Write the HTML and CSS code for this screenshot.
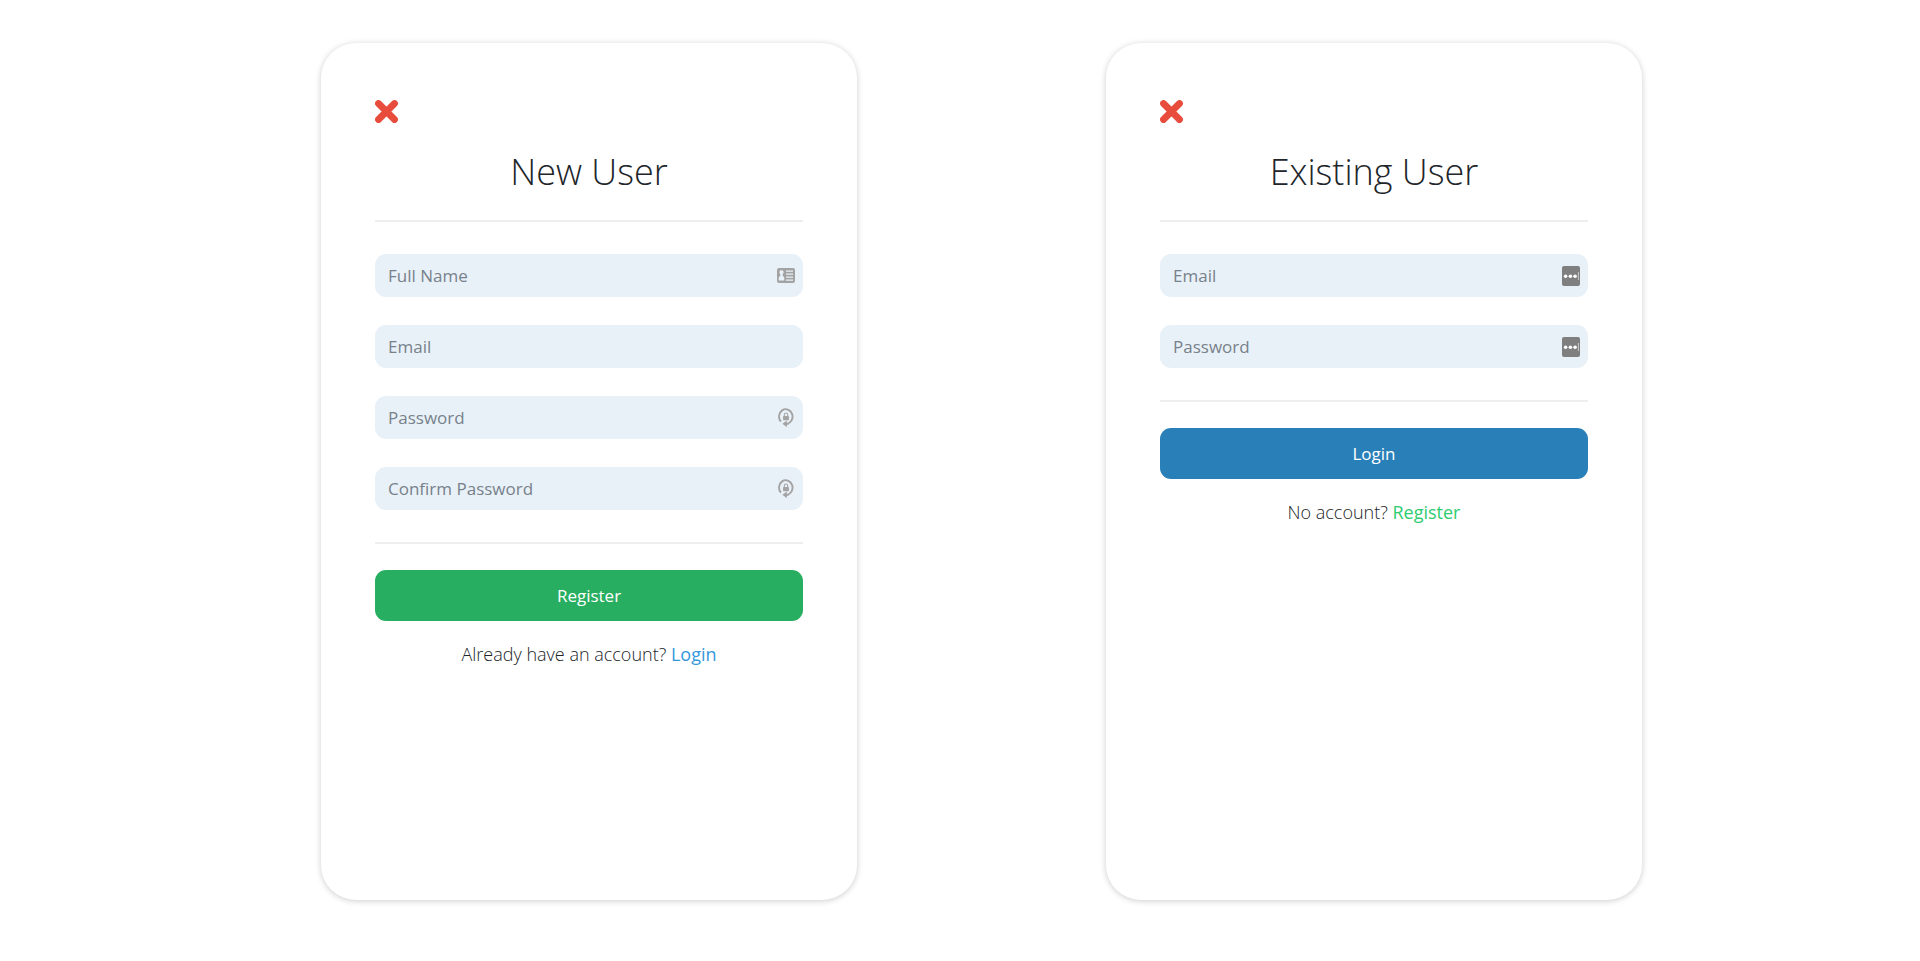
FILE: index.html
```html
<!DOCTYPE html>
<html lang="en">
<head>
<meta charset="utf-8">
<meta name="viewport" content="width=device-width, initial-scale=1">
<title>Account</title>
<link rel="stylesheet" href="styles.css">
</head>
<body>
<svg class="sprite" width="0" height="0" aria-hidden="true">
  <symbol id="close" viewBox="0 0 24 24"><path d="M3.5 3.5 19.5 19.5M19.5 3.5 3.5 19.5" fill="none" stroke="currentColor" stroke-width="6.8" stroke-linecap="round"/></symbol>
  <symbol id="card" viewBox="0 0 18 15">
    <rect width="18" height="15" rx="2" fill="#a3a3a3"/>
    <path d="M9 2.6H16V3.8H9ZM9 5.6H16V6.8H9ZM9 8.6H16V9.8H9ZM9 11.6H16V12.8H9Z" fill="#eaf1f8"/>
    <path d="M4.5 2.4A1.9 1.9 0 0 1 5.9 5.8L5.6 8Q7.3 8.4 7.3 10V12.6H1.7V10Q1.7 8.4 3.4 8L3.1 5.8A1.9 1.9 0 0 1 4.5 2.4Z" fill="#eaf1f8"/>
  </symbol>
  <symbol id="generate" viewBox="0 0 16 18">
    <path d="M3.2 13A6.4 7 0 1 1 9 15" fill="none" stroke="#a3a3a3" stroke-width="1.8"/>
    <path d="M4.6 15 8.8 11.8V18.2ZM8 14.1H10.5V15.9H8Z" fill="#a3a3a3"/>
    <rect x="5.2" y="7.6" width="5.6" height="3.9" rx=".4" fill="#a3a3a3"/>
    <path d="M6.4 8V6.4a1.6 1.6 0 0 1 3.2 0V8" fill="none" stroke="#a3a3a3" stroke-width="1"/>
  </symbol>
  <symbol id="fill" viewBox="0 0 18 20">
    <rect width="18" height="20" rx="2" fill="#7f7f7f"/>
    <circle cx="3.6" cy="10.2" r="1.8" fill="#fff"/><circle cx="8.4" cy="10.2" r="1.8" fill="#fff"/><circle cx="13.1" cy="10.2" r="1.8" fill="#fff"/>
    <path d="M16.4 6V14" stroke="#c8c8c8" stroke-width="1"/>
  </symbol>
</svg>
<main class="page">
  <form class="card" id="register">
    <button class="close" type="button" aria-label="Close"><svg class="close-icon"><use href="#close"/></svg></button>
    <h1 class="title">New User</h1>
    <hr class="rule">
    <div class="fields">
      <div class="field"><input class="input" type="text" placeholder="Full Name" aria-label="Full Name"><svg class="icon" width="18" height="15"><use href="#card"/></svg></div>
      <div class="field"><input class="input" type="email" placeholder="Email" aria-label="Email"></div>
      <div class="field"><input class="input" type="password" placeholder="Password" aria-label="Password"><svg class="icon" width="18" height="19"><use href="#generate"/></svg></div>
      <div class="field"><input class="input" type="password" placeholder="Confirm Password" aria-label="Confirm Password"><svg class="icon" width="18" height="19"><use href="#generate"/></svg></div>
    </div>
    <hr class="rule">
    <button class="submit submit-register" type="button">Register</button>
    <p class="switch">Already have an account? <a class="link-login" href="#login">Login</a></p>
  </form>
  <form class="card" id="login">
    <button class="close" type="button" aria-label="Close"><svg class="close-icon"><use href="#close"/></svg></button>
    <h1 class="title">Existing User</h1>
    <hr class="rule">
    <div class="fields">
      <div class="field"><input class="input" type="email" placeholder="Email" aria-label="Email"><svg class="icon" width="18" height="20"><use href="#fill"/></svg></div>
      <div class="field"><input class="input" type="password" placeholder="Password" aria-label="Password"><svg class="icon" width="18" height="20"><use href="#fill"/></svg></div>
    </div>
    <hr class="rule">
    <button class="submit submit-login" type="button">Login</button>
    <p class="switch">No account? <a class="link-register" href="#register">Register</a></p>
  </form>
</main>
</body>
</html>
```
FILE: styles.css
```css
* { box-sizing: border-box; }
body {
  margin: 0;
  background: #fff;
  font-family: "Open Sans", "Noto Sans", sans-serif;
  color: #212529;
}
.sprite { position: absolute; }
.page {
  display: grid;
  grid-template-columns: repeat(auto-fit, minmax(300px, 536px));
  justify-content: center;
  gap: 40px 249px;
  min-height: 100vh;
  padding: 43px 0 61px 43px;
}
.card {
  display: flex;
  flex-direction: column;
  padding: 57px 54px;
  background: #fff;
  border-radius: 35px;
  box-shadow: 0 1px 6px rgba(0, 0, 0, 0.2);
}
.close {
  align-self: flex-start;
  display: flex;
  padding: 0;
  border: 0;
  background: none;
  color: #e74c3c;
  cursor: pointer;
}
.close-icon { width: 24px; height: 24px; }
.title {
  margin: 20px 0;
  font-size: 36px;
  line-height: 56px;
  font-weight: 300;
  text-align: center;
}
.rule {
  width: 100%;
  height: 2px;
  margin: 0;
  border: 0;
  background: #eee;
}
.fields {
  display: grid;
  gap: 28px;
  margin: 32px 0;
}
.field {
  display: flex;
  align-items: center;
  height: 43px;
  padding: 0 8px 0 13px;
  border-radius: 11px;
  background: #e9f1f8;
}
.input {
  flex: 1;
  min-width: 0;
  padding: 0;
  border: 0;
  outline: 0;
  background: none;
  font: inherit;
  font-size: 17px;
  color: #212529;
}
.input::placeholder { color: #77818b; opacity: 1; }
.icon { flex: none; }
.submit {
  height: 51px;
  margin-top: 26px;
  border: 0;
  border-radius: 11px;
  color: #fff;
  font: inherit;
  font-size: 17px;
  cursor: pointer;
}
.submit-register { background: #27ae60; }
.submit-login { background: #2980b9; }
.switch {
  margin: 20px 0 0;
  font-size: 18px;
  line-height: 26px;
  font-weight: 300;
  text-align: center;
}
.switch a { font-weight: 400; text-decoration: none; }
.link-login { color: #3498db; }
.link-register { color: #2ecc71; }
```
